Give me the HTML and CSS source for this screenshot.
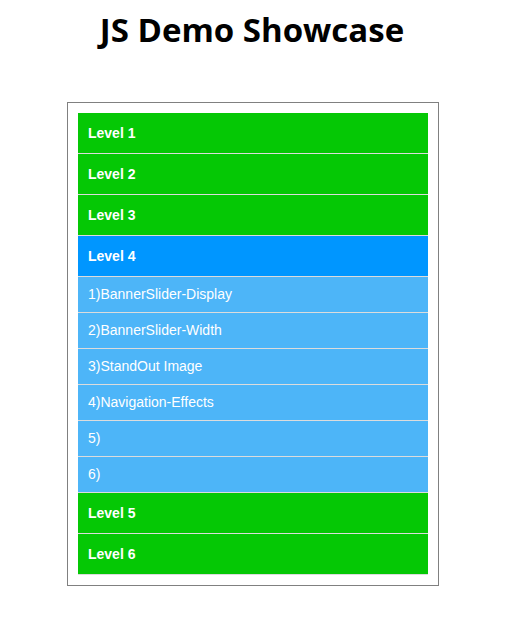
FILE: index.html
```html
<!DOCTYPE html>
<html>
<head>
<meta charset="utf-8">
<link rel="stylesheet" href="styles.css">
</head>
<body>
<h1 class="title">JS Demo Showcase</h1>
<div class="panel">
  <ul class="menu">
    <li class="level">Level 1</li>
    <li class="level">Level 2</li>
    <li class="level">Level 3</li>
    <li class="level active">Level 4</li>
    <li class="sub">1)BannerSlider-Display</li>
    <li class="sub">2)BannerSlider-Width</li>
    <li class="sub">3)StandOut Image</li>
    <li class="sub">4)Navigation-Effects</li>
    <li class="sub">5)</li>
    <li class="sub">6)</li>
    <li class="level">Level 5</li>
    <li class="level">Level 6</li>
  </ul>
</div>
</body>
</html>
```
FILE: styles.css
```css
html, body {
  margin: 0;
  padding: 0;
  background: #fff;
}
body {
  font-family: "Liberation Sans", Arial, sans-serif;
}
.title {
  font-family: "Open Sans", "Noto Sans", sans-serif;
  font-weight: 700;
  font-size: 33px;
  line-height: 40px;
  margin: 10px 0 0 0;
  width: 504px;
  text-align: center;
  color: #000;
}
.panel {
  margin: 52px 0 0 67px;
  width: 350px;
  padding: 10px;
  border: 1px solid #808080;
}
.menu {
  list-style: none;
  margin: 0;
  padding: 0;
}
.level {
  height: 40px;
  line-height: 40px;
  padding-left: 10px;
  background: #05c805;
  color: #fff;
  font-weight: 700;
  font-size: 14px;
  border-bottom: 1px solid #dcdcdc;
}
.level.active {
  background: #0096ff;
}
.sub {
  height: 35px;
  line-height: 35px;
  padding-left: 10px;
  background: #4db5f8;
  color: #fff;
  font-size: 14px;
  border-bottom: 1px solid #dcdcdc;
}
```
